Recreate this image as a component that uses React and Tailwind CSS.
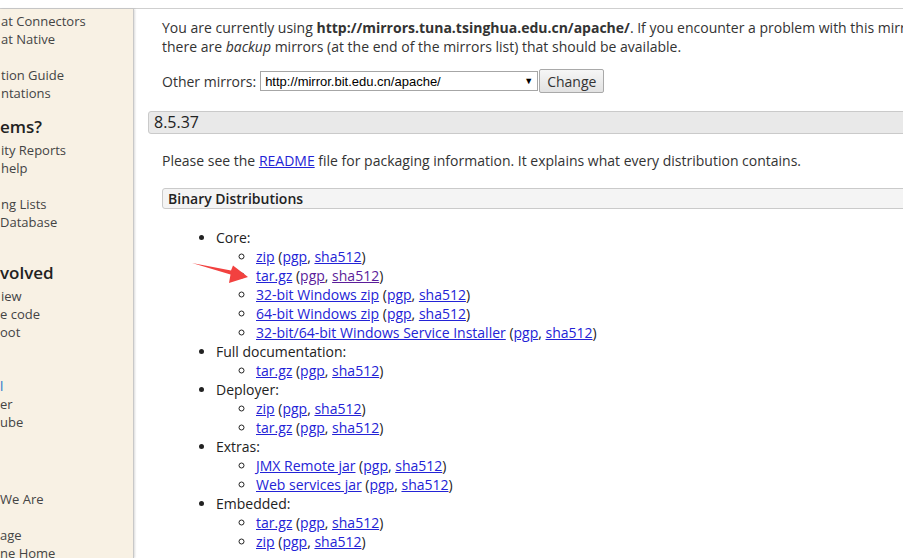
import React from "react";

const L = ({ children, v }) => (
  <a href="#" className={"underline " + (v ? "text-[#5b1d9a]" : "text-[#2323d6]")}>
    {children}
  </a>
);

const Pair = ({ v }) => (
  <>
    {" ("}
    <L v={v}>pgp</L>, <L v={v}>sha512</L>)
  </>
);

export default function App() {
  return (
    <div
      className="relative w-[903px] h-[558px] overflow-hidden bg-white"
      style={{ fontFamily: '"Open Sans", "Noto Sans", sans-serif' }}
    >
      <div className="h-[8px] bg-white" />
      <div className="flex border-t border-[#cfcfcf] h-[550px]">
        {/* Sidebar */}
        <div className="w-[134px] shrink-0 bg-[#f8f1e4] border-r border-[#c8c8c8] shadow-[1px_0_2px_rgba(0,0,0,0.15)] text-[13px] leading-[18px] text-[#444] flex flex-col pt-[3px] overflow-hidden whitespace-nowrap">
          <div className="pl-[1px]">at Connectors</div>
          <div className="pl-[1px]">at Native</div>
          <div className="mt-[18px] pl-[1px]">tion Guide</div>
          <div className="pl-[1px]">ntations</div>
          <div className="mt-[14px] text-[17px] leading-[22px] font-semibold text-[#222]">ems?</div>
          <div className="mt-[3px] pl-[1px]">ity Reports</div>
          <div className="pl-[1px]">help</div>
          <div className="mt-[18px] pl-[1px]">ng Lists</div>
          <div>Database</div>
          <div className="mt-[31px] text-[17px] leading-[22px] font-semibold text-[#222]">volved</div>
          <div className="mt-[3px] pl-[1px]">iew</div>
          <div>e code</div>
          <div>oot</div>
          <div className="mt-[36px] text-[#1a76c9]">l</div>
          <div>er</div>
          <div>ube</div>
          <div className="mt-[59px]">We Are</div>
          <div className="mt-[18px]">age</div>
          <div>ne Home</div>
        </div>

        {/* Main */}
        <div className="flex-1 min-w-0 pl-[14px] pt-[9px] text-[14px] leading-[19px] text-[#333] whitespace-nowrap">
          <div className="pl-[14px]">
            You are currently using <b>http://mirrors.tuna.tsinghua.edu.cn/apache/</b>. If you encounter a problem with this mirror, please select another mirror. If all mirrors are failing,
            <br />
            there are <i>backup</i> mirrors (at the end of the mirrors list) that should be available.
          </div>

          <div className="pl-[14px] mt-[13px] flex items-center h-[24px]">
            <span>Other mirrors:</span>
            <div
              className="ml-[4px] w-[278px] h-[20px] border border-[#a6a6a6] bg-white flex items-center justify-between px-[4px] text-[13px] text-black"
              style={{ fontFamily: '"Liberation Sans", Arial, sans-serif' }}
            >
              <span>http://mirror.bit.edu.cn/apache/</span>
              <span className="text-[9px]">▼</span>
            </div>
            <div className="ml-[1px] h-[24px] px-[7px] border border-[#a9a9a9] rounded-[2px] bg-gradient-to-b from-[#f6f6f6] to-[#e2e2e2] flex items-center text-[14px] text-[#333]">
              Change
            </div>
          </div>

          <div className="mt-[18px] w-[820px] h-[23px] bg-[#e9e9e9] border border-[#cacaca] rounded-[3px] pl-[5px] flex items-center text-[16px] text-[#222]">
            8.5.37
          </div>

          <div className="pl-[14px] mt-[17px]">
            Please see the <L>README</L> file for packaging information. It explains what every distribution contains.
          </div>

          <div className="ml-[14px] mt-[18px] w-[800px] h-[21px] bg-[#f4f4f4] border border-[#cacaca] rounded-[3px] pl-[5px] flex items-center font-semibold text-[#222]">
            Binary Distributions
          </div>

          <ul className="mt-[19px] pl-[68px] list-disc text-[#222]">
            <li>
              Core:
              <ul className="pl-[40px] list-[circle]">
                <li><L>zip</L><Pair /></li>
                <li><L>tar.gz</L><Pair v /></li>
                <li><L>32-bit Windows zip</L><Pair /></li>
                <li><L>64-bit Windows zip</L><Pair /></li>
                <li><L>32-bit/64-bit Windows Service Installer</L><Pair /></li>
              </ul>
            </li>
            <li>
              Full documentation:
              <ul className="pl-[40px] list-[circle]">
                <li><L>tar.gz</L><Pair /></li>
              </ul>
            </li>
            <li>
              Deployer:
              <ul className="pl-[40px] list-[circle]">
                <li><L>zip</L><Pair /></li>
                <li><L>tar.gz</L><Pair /></li>
              </ul>
            </li>
            <li>
              Extras:
              <ul className="pl-[40px] list-[circle]">
                <li><L>JMX Remote jar</L><Pair /></li>
                <li><L>Web services jar</L><Pair /></li>
              </ul>
            </li>
            <li>
              Embedded:
              <ul className="pl-[40px] list-[circle]">
                <li><L>tar.gz</L><Pair /></li>
                <li><L>zip</L><Pair /></li>
              </ul>
            </li>
          </ul>
        </div>
      </div>

      {/* red annotation arrow */}
      <svg className="absolute left-0 top-0 pointer-events-none" width="903" height="558">
        <polygon
          points="192,263 231,270.5 233,265.5 248,277 229,283 230.5,274.5"
          fill="#f2413f"
        />
      </svg>
    </div>
  );
}
